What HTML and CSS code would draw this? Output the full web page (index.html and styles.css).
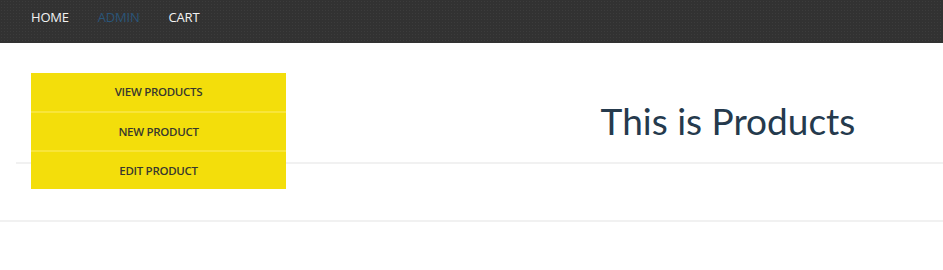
FILE: index.html
```html
<!DOCTYPE html>
<html>
<head>
<meta charset="utf-8">
<link rel="stylesheet" href="styles.css">
</head>
<body>
<nav class="navbar">
  <ul class="nav">
    <li><a class="nav-link" href="#">Home</a></li>
    <li><a class="nav-link active" href="#">Admin</a></li>
    <li><a class="nav-link" href="#">Cart</a></li>
  </ul>
</nav>
<ul class="dropdown">
  <li><a href="#">View Products</a></li>
  <li><a href="#">New Product</a></li>
  <li><a href="#">Edit Product</a></li>
</ul>
<main class="page">
  <section class="hero">
    <div class="hero-left"></div>
    <div class="hero-right"><h1 class="title">This is Products</h1></div>
  </section>
  <div class="spacer"></div>
</main>
</body>
</html>
```
FILE: styles.css
```css
* { box-sizing: border-box; }
html, body { margin: 0; padding: 0; background: #fff; }
body { font-family: "Open Sans", "Noto Sans", sans-serif; }
.navbar {
  height: 43px;
  background-color: #323232;
  background-image: radial-gradient(#3c3c3c 0.8px, transparent 1px);
  background-size: 3px 3px;
}
.nav {
  list-style: none;
  margin: 0;
  padding: 0 0 0 31px;
  display: flex;
  gap: 29px;
  height: 100%;
}
.nav-link {
  display: block;
  line-height: 34px;
  font-size: 13px;
  color: #f2f2f2;
  text-decoration: none;
  text-transform: uppercase;
  letter-spacing: -0.2px;
}
.nav-link.active { color: #2a5578; }
.dropdown {
  position: absolute;
  top: 73px;
  left: 31px;
  width: 255px;
  margin: 0;
  padding: 0;
  list-style: none;
  background: #f3de0b;
  z-index: 2;
}
.dropdown li + li { border-top: 2px solid #f8e53a; }
.dropdown a {
  display: block;
  height: 37px;
  line-height: 37px;
  text-align: center;
  font-size: 11.5px;
  font-weight: 600;
  color: #38382e;
  text-decoration: none;
  text-transform: uppercase;
  letter-spacing: -0.3px;
}
.dropdown li:first-child a { height: 38px; line-height: 38px; }
.hero {
  margin-left: 16px;
  height: 121px;
  display: grid;
  grid-template-columns: 497px 1fr;
  border-bottom: 2px solid #f1f1f1;
}
.hero-right { display: flex; align-items: center; justify-content: center; padding-top: 36px; }
.title {
  margin: 0;
  font-family: "Lato", "Noto Sans", sans-serif;
  font-weight: 400;
  font-size: 37px;
  color: #253a4d;
}
.spacer { height: 58px; border-bottom: 2px solid #f1f1f1; }
```
